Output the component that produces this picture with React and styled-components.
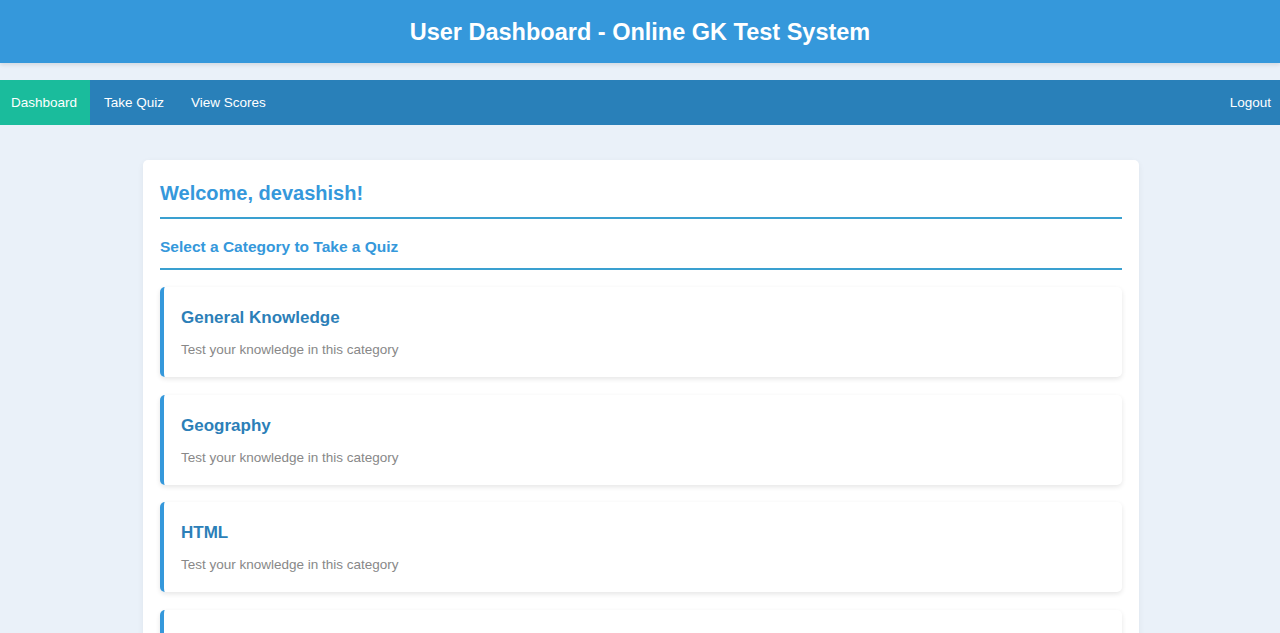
import React from 'react';
import styled, { createGlobalStyle } from 'styled-components';

const categories = ['General Knowledge', 'Geography', 'HTML', 'JavaScript'];

function App() {
    return (
        <>
            <Global />
            <Header>
                <Title>User Dashboard - Online GK Test System</Title>
            </Header>
            <Nav>
                <NavLinks>
                    <NavItem active>Dashboard</NavItem>
                    <NavItem>Take Quiz</NavItem>
                    <NavItem>View Scores</NavItem>
                </NavLinks>
                <NavItem last>Logout</NavItem>
            </Nav>
            <Main>
                <Welcome>Welcome, devashish!</Welcome>
                <SubHead>Select a Category to Take a Quiz</SubHead>
                <List>
                    {categories.map((c) => (
                        <Category key={c}>
                            <CatTitle>{c}</CatTitle>
                            <CatText>Test your knowledge in this category</CatText>
                        </Category>
                    ))}
                </List>
            </Main>
        </>
    );
}

const Global = createGlobalStyle`
    body {
        margin: 0;
        background: #eaf1f9;
        font-family: "Liberation Sans", Arial, sans-serif;
    }
`;
const Header = styled.header`
    height: 63px;
    background: #3598db;
    display: flex;
    align-items: center;
    justify-content: center;
    box-shadow: 0 2px 4px rgba(0, 0, 0, 0.1);
`;
const Title = styled.h1`
    margin: 1px 0 0;
    color: #fff;
    font-size: 23.5px;
    font-weight: bold;
`;
const Nav = styled.nav`
    margin-top: 17px;
    height: 45px;
    background: #2980b9;
    display: flex;
    justify-content: space-between;
    align-items: stretch;
`;
const NavLinks = styled.div`
    display: flex;
`;
const NavItem = styled.a`
    display: flex;
    align-items: center;
    padding: 0 ${(p) => (p.last ? '9px' : '13px')} 1px ${(p) => (p.active ? '11px' : '14px')};
    color: #fff;
    font-size: 13.5px;
    background: ${(p) => (p.active ? '#1abc9c' : 'transparent')};
    cursor: pointer;
`;
const Main = styled.main`
    width: 996px;
    box-sizing: border-box;
    margin: 35px 0 0 143px;
    background: #fff;
    border-radius: 5px;
    padding: 21px 17px 20px 17px;
    box-shadow: 0 2px 6px rgba(0, 0, 0, 0.06);
`;
const Welcome = styled.h2`
    margin: 0;
    height: 24px;
    font-size: 20px;
    line-height: 24px;
    color: #3598db;
    padding-bottom: 12px;
    border-bottom: 2px solid #3aa0d0;
`;
const SubHead = styled.h3`
    margin: 19px 0 0;
    height: 18px;
    font-size: 15.5px;
    line-height: 18px;
    color: #3598db;
    padding-bottom: 12px;
    border-bottom: 2px solid #3aa0d0;
`;
const List = styled.div`
    margin-top: 17px;
    display: flex;
    flex-direction: column;
    gap: 17.6px;
`;
const Category = styled.div`
    background: #fff;
    border-left: 4px solid #3598db;
    border-radius: 5px;
    padding: 21px 17px 19px;
    box-shadow: 0 2px 5px rgba(0, 0, 0, 0.1);
`;
const CatTitle = styled.h4`
    margin: 0;
    font-size: 17px;
    line-height: 20px;
    font-weight: bold;
    color: #2c7fb8;
`;
const CatText = styled.p`
    margin: 14px 0 0;
    font-size: 13.5px;
    line-height: 16px;
    color: #888;
`;

export default App;
